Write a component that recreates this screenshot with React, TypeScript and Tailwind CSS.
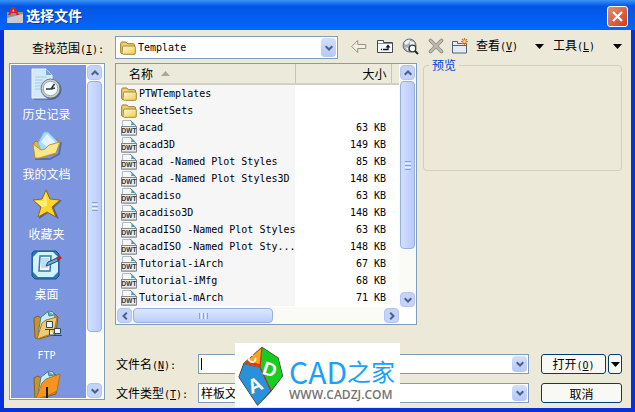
import type { ReactNode } from "react";

const files: { name: string; size?: string }[] = [
  { name: "PTWTemplates" },
  { name: "SheetSets" },
  { name: "acad", size: "63 KB" },
  { name: "acad3D", size: "149 KB" },
  { name: "acad -Named Plot Styles", size: "85 KB" },
  { name: "acad -Named Plot Styles3D", size: "148 KB" },
  { name: "acadiso", size: "63 KB" },
  { name: "acadiso3D", size: "148 KB" },
  { name: "acadISO -Named Plot Styles", size: "63 KB" },
  { name: "acadISO -Named Plot Sty...", size: "148 KB" },
  { name: "Tutorial-iArch", size: "67 KB" },
  { name: "Tutorial-iMfg", size: "68 KB" },
  { name: "Tutorial-mArch", size: "71 KB" },
];

function Latin({ children }: { children: ReactNode }) {
  return <span className="font-['DejaVu_Sans_Mono',monospace] text-[10px]">{children}</span>;
}

function Hotkey({ letter, colon }: { letter: string; colon?: boolean }) {
  return (
    <Latin>
      (<u className="underline-offset-1">{letter}</u>){colon ? ":" : ""}
    </Latin>
  );
}

function FolderIcon() {
  return (
    <svg className="h-4 w-4 shrink-0" viewBox="0 0 16 16" aria-hidden="true">
      <defs>
        <linearGradient id="folder" x1="0" y1="0" x2="1" y2="1">
          <stop offset="0" stopColor="#fffbd0" />
          <stop offset="1" stopColor="#efcb55" />
        </linearGradient>
      </defs>
      <path d="M.7 12.500V3.600Q.7 2 1.800 2h4l1.600 1.700h6q1 0 1 1v7.800q0 1-1 1h-11.600q-1.100 0-1.100-1z" fill="#f0d070" stroke="#9a7922" />
      <path d="M3.600 6h10.500q1.300 0 1.200 1.100v5.700q0 1.500-1.100 1.500H3.400Q2 14.300 2.100 12.800L2.500 7q.1-1 1.100-1z" fill="url(#folder)" stroke="#a9872e" />
    </svg>
  );
}

function DwtIcon() {
  return (
    <svg className="h-[17px] w-4 shrink-0" viewBox="0 0 16 17" aria-hidden="true">
      <path d="M1.500 1.500h8.500l4.500 4.500v10.500h-13z" fill="#f6f8f9" stroke="#b4babd" />
      <path d="M9 1l6 6V16" fill="none" stroke="#8d9599" />
      <path d="M9.200 1.200q2 2 .8 5 2-.8 5 .6z" fill="#4a9bbd" />
      <rect x=".5" y="7.500" width="15" height="8.500" fill="#e9ebec" stroke="#84898c" />
      <text x="8" y="14.200" textAnchor="middle" fontSize="6.500" fontWeight="bold" fontFamily="Liberation Sans, sans-serif" fill="#333">DWT</text>
    </svg>
  );
}

function Chevron({ className }: { className?: string }) {
  return (
    <svg className={`h-2 w-2 ${className ?? ""}`} viewBox="0 0 8 8" aria-hidden="true">
      <path d="M.7 2.200L4 5.500l3.300-3.300" fill="none" stroke="#4d6185" strokeWidth="2" />
    </svg>
  );
}

function ScrollButton({ label, turn }: { label: string; turn: string }) {
  return (
    <button type="button" aria-label={label} className="flex h-[15px] w-[15px] shrink-0 items-center justify-center rounded-sm border border-[#b4c6ee] bg-[#c4d3fb]">
      <Chevron className={turn} />
    </button>
  );
}

function DropBox() {
  return (
    <span className="pointer-events-none flex w-[15px] shrink-0 items-center justify-center self-stretch rounded-sm bg-linear-to-b from-[#d2dffd] to-[#b4c8f6]">
      <Chevron />
    </span>
  );
}

function DownTriangle() {
  return (
    <svg className="h-[5px] w-[9px] shrink-0" viewBox="0 0 9 5" aria-hidden="true">
      <path d="M0 0h9L4.500 5z" fill="#000" />
    </svg>
  );
}

function VerticalThumb({ grow }: { grow: string }) {
  return (
    <div className={`my-px flex w-[15px] flex-col items-center justify-center gap-px rounded-sm border border-[#98b0e0] bg-linear-to-r from-[#d3dfff] to-[#b8cbfa] ${grow}`}>
      <span className="h-px w-[6px] bg-[#8ca4dc]" />
      <span className="h-px w-[6px] bg-[#eef4fe]" />
      <span className="h-px w-[6px] bg-[#8ca4dc]" />
      <span className="h-px w-[6px] bg-[#eef4fe]" />
      <span className="h-px w-[6px] bg-[#8ca4dc]" />
    </div>
  );
}

function HistoryIcon() {
  return (
    <svg className="h-[34px] w-8" viewBox="0 0 32 34" aria-hidden="true">
      <path d="M3 31h17l5-2" fill="none" stroke="#4a5f9c" strokeWidth="2" opacity=".6" />
      <path d="M1 1h14l6 6v23H1z" fill="#d3e8f8" stroke="#e9f5fd" />
      <path d="M15 1v6h6z" fill="#6fa9d6" />
      <path d="M4 9h12M4 12h8M4 15h7M4 18h6M4 21h5" stroke="#a5cbe9" />
      <circle cx="20.500" cy="21.500" r="10" fill="#3f4d66" opacity=".7" />
      <circle cx="19.500" cy="20.500" r="9.500" fill="#c8cfce" stroke="#6f7f80" />
      <circle cx="19.500" cy="20.500" r="7.200" fill="#f5fdff" stroke="#9aabab" />
      <path d="M23.500 16l-3.500 5h-5M20 21l4-1" fill="none" stroke="#26394b" strokeWidth="1.600" />
    </svg>
  );
}

function DocumentsIcon() {
  return (
    <svg className="h-[34px] w-8" viewBox="0 0 32 34" aria-hidden="true">
      <path d="M4 31h15l9-5 2-12" fill="none" stroke="#43548e" strokeWidth="2" opacity=".6" />
      <path d="M2 16l3-3 4 2 17-4 2 4-4 11-20 4z" fill="#e6b432" stroke="#a97d1d" />
      <path d="M7 15l6-11h4l10 10-5 9-11 2z" fill="#a9dafa" stroke="#78b6e2" />
      <path d="M10 14l6-8 8 8-5 7z" fill="#e2f5ff" />
      <path d="M2 16l8 6 4-1 4-4 11-3-4 11-17 5H4z" fill="#fbe58d" stroke="#c79527" />
    </svg>
  );
}

function StarIcon() {
  return (
    <svg className="h-[34px] w-8" viewBox="0 0 32 34" aria-hidden="true">
      <path d="M16 3l4 10 11-1-8 8 5 11-11-6-9 6 2-11-8-8h10z" fill="#40487a" opacity=".7" />
      <path d="M15 2l4 9 10 1-8 7 4 10-9-5-9 5 3-10-8-7 9-1z" fill="#ffd629" stroke="#9c6a0b" strokeLinejoin="round" />
      <path d="M15 5l-3 8-8 0 7 6 5-1z" fill="#fff07a" />
    </svg>
  );
}

function DesktopIcon() {
  return (
    <svg className="h-[34px] w-8" viewBox="0 0 32 34" aria-hidden="true">
      <path d="M1 5l2-2h22l3 3v22l-3 3H4l-3-3z" fill="#2f77bd" stroke="#15508d" />
      <path d="M2 9l5-5h15l5 5v15l-5 5H7l-5-5z" fill="#d3f0fd" />
      <path d="M9 8h11l-1 15H8z" fill="#f8fdff" stroke="#2d78b4" strokeWidth="1.500" />
      <path d="M10 10h8l-1 10h-7z" fill="#bcdff3" />
      <path d="M15 18l2-4 9-4 1 3-9 4z" fill="#75a7cf" stroke="#1c4c7c" />
      <path d="M26 11l4-2" stroke="#b3263a" strokeWidth="3.500" />
    </svg>
  );
}

function FtpIcon({ orange }: { orange?: boolean }) {
  return (
    <svg className="h-[34px] w-8" viewBox="0 0 32 34" aria-hidden="true">
      <path d="M3 10l4-2 3 2 14-4 3 3-2 17-17 5-4-1z" fill="#c99231" stroke="#84601e" />
      <path d="M7 26L10 9l8-6 4 1 2 4-4 18z" fill="#c7edfa" stroke="#477c92" />
      <path d="M17 3l1 5 5-1" fill="#6eaac4" stroke="#477c92" />
      <path d={orange ? "M5 31l6-16 4-4 14-5-3 17-10 5z" : "M6 31l5-16 4-3 11-3-3 16z"} fill={orange ? "#f7941e" : "#edcb70"} stroke="#a77723" />
      {orange ? (
        <path d="M16 19v13" stroke="#1c2026" strokeWidth="2" />
      ) : (
        <g fill="#e9f8ff" stroke="#354862">
          <path d="M15.500 13.500h6v6h-6zM14 21.500h9M18.500 22v5h5M23.500 20.500h6v5h-6zM22 27.500h9" />
        </g>
      )}
    </svg>
  );
}

const places = [
  { label: "历史记录", icon: <HistoryIcon /> },
  { label: "我的文档", icon: <DocumentsIcon /> },
  { label: "收藏夹", icon: <StarIcon /> },
  { label: "桌面", icon: <DesktopIcon /> },
  { label: "FTP", icon: <FtpIcon /> },
  { label: "", icon: <FtpIcon orange /> },
];

function TitleBar() {
  return (
    <header className="flex h-[30px] shrink-0 items-center bg-linear-to-b from-[#3a93f8] via-[#0355e4] via-20% to-[#0366fa] px-[7px]">
      <svg className="h-4 w-4" viewBox="0 0 16 16" aria-hidden="true">
        <path d="M0 5h16v11H0z" fill="#8f9297" />
        <path d="M0 11l16-4v9H0z" fill="#c9cbcd" />
        <path d="M1 8L4.500 0h3.500l4 8H9.500L8.500 6h-4L3.500 8z" fill="#d92024" />
        <path d="M5.300 4.500L6.300 2l1.200 2.500z" fill="#fff" />
      </svg>
      <h1 className="ml-[3px] flex-1 text-sm leading-5 font-bold text-white [text-shadow:1px_1px_#0c3690]">选择文件</h1>
      <button type="button" aria-label="关闭" className="mt-[3px] flex h-[21px] w-[21px] items-center justify-center rounded-[3px] border border-white bg-linear-to-br from-[#e98a6c] to-[#cc3a12]">
        <svg className="h-[11px] w-[11px]" viewBox="0 0 11 11" aria-hidden="true">
          <path d="M1 1l9 9M10 1l-9 9" stroke="#fff" strokeWidth="2.200" />
        </svg>
      </button>
    </header>
  );
}

function Toolbar() {
  return (
    <div className="flex h-5 w-[271px] shrink-0 items-center">
      <button type="button" aria-label="后退" className="w-[26px]">
        <svg className="h-4 w-4" viewBox="0 0 16 16" aria-hidden="true">
          <path d="M.7 8.500l6-6v4h8v4h-8v4z" fill="#f2f0e4" stroke="#92948a" />
        </svg>
      </button>
      <button type="button" aria-label="向上一级" className="w-[25px]">
        <svg className="h-4 w-4" viewBox="0 0 16 16" aria-hidden="true">
          <path d="M.5 14.500v-12h6v2h9v10z" fill="#f6f8fb" stroke="#3f4650" />
          <path d="M1 5.500h14" stroke="#89909a" />
          <path d="M4 11.500h1M6 11.500h5V8" fill="none" stroke="#111" strokeWidth="1.300" />
          <path d="M8.500 9.500L11 6.500l2.500 3z" fill="#111" />
        </svg>
      </button>
      <button type="button" aria-label="搜索 Web" className="w-[26px]">
        <svg className="h-[17px] w-[17px]" viewBox="0 0 17 17" aria-hidden="true">
          <circle cx="7.500" cy="7.500" r="6.500" fill="#a3adb3" stroke="#66706f" />
          <path d="M2 5q3-4 6-3l-1 3-3 2zM8 3l4 1 1 4-5-1zM3 9l3 1v3z" fill="#eef4f5" />
          <circle cx="10.500" cy="10.500" r="3.300" fill="#fff" stroke="#303942" strokeWidth="1.300" />
          <path d="M13 13l3 3" stroke="#20262b" strokeWidth="2" />
        </svg>
      </button>
      <button type="button" aria-label="删除" className="w-6">
        <svg className="h-4 w-4" viewBox="0 0 16 16" aria-hidden="true">
          <path d="M2.500 2.500l11 11M13.500 2.500l-11 11" stroke="#8a8b82" strokeWidth="3.600" strokeLinecap="round" />
          <path d="M2.500 2.500l11 11M13.500 2.500l-11 11" stroke="#bdbcb0" strokeWidth="2" strokeLinecap="round" />
        </svg>
      </button>
      <button type="button" aria-label="创建新文件夹" className="w-6">
        <svg className="h-4 w-4" viewBox="0 0 16 16" aria-hidden="true">
          <path d="M.5 15v-11.500h5v2h9V15z" fill="#e6ebf5" stroke="#536078" />
          <path d="M1 7.500h13" stroke="#536078" />
          <path d="M12.500 0v7M9 3.500h7M10 1l5 5M15 1l-5 5" stroke="#dc7422" strokeWidth="1.200" />
          <circle cx="12.500" cy="3.500" r="1.300" fill="#ffe08a" />
        </svg>
      </button>
      <button type="button" className="flex flex-1 items-center justify-between pr-[9px] leading-4">
        <span>查看<Hotkey letter="V" /></span>
        <DownTriangle />
      </button>
      <button type="button" className="flex w-[69px] items-center justify-between leading-4">
        <span>工具<Hotkey letter="L" /></span>
        <DownTriangle />
      </button>
    </div>
  );
}

function PlacesBar() {
  return (
    <nav aria-label="位置" className="mb-[3px] flex w-24 shrink-0 overflow-hidden border border-[#7f9db9] bg-white p-px">
      <ul className="h-full flex-1 overflow-hidden bg-[#7b95de]">
        {places.map((place, i) => (
          <li key={i}>
            <button type="button" className="flex h-[60px] w-full flex-col items-center gap-1 pt-[3px] pr-1 text-white">
              {place.icon}
              <span className="leading-4">{place.label === "FTP" ? <Latin>FTP</Latin> : place.label}</span>
            </button>
          </li>
        ))}
      </ul>
      <div className="flex w-[17px] flex-col items-center bg-[#fafaf6]">
        <ScrollButton label="向上滚动" turn="rotate-180" />
        <VerticalThumb grow="flex-[5]" />
        <div className="flex-1" />
        <ScrollButton label="向下滚动" turn="" />
      </div>
    </nav>
  );
}

function FileList() {
  return (
    <section className="flex min-w-0 flex-1 flex-col border border-[#7f9db9] bg-white">
      <div className="flex min-h-0 flex-1">
        <div className="min-w-0 flex-1 overflow-hidden">
          <table className="w-full table-fixed border-collapse">
            <thead className="bg-[#ebeadb]">
              <tr className="h-5 border-b-2 border-[#d3d0c1] leading-4">
                <th scope="col" className="p-0 pl-[13px] text-left font-normal">
                  <span className="flex items-center gap-2">
                    名称
                    <svg className="h-[5px] w-[9px]" viewBox="0 0 9 5" aria-hidden="true">
                      <path d="M0 5h9L4.500 0z" fill="#aca899" />
                    </svg>
                  </span>
                </th>
                <th scope="col" className="w-24 border-x border-[#c7c5b2] p-0 pr-1 text-right font-normal">大小</th>
                <td className="w-2 p-0" />
              </tr>
            </thead>
            <tbody>
              {files.map((file) => (
                <tr key={file.name} className="h-[17px] leading-[17px]">
                  <td className="bg-[#f6f6f6] p-0 pl-[5px]">
                    <span className="flex h-[17px] items-center gap-[2px] whitespace-nowrap">
                      {file.size ? <DwtIcon /> : <FolderIcon />}
                      <Latin>{file.name}</Latin>
                    </span>
                  </td>
                  <td className="p-0 pr-[5px]">
                    <span className="flex h-[17px] items-center justify-end whitespace-nowrap"><Latin>{file.size}</Latin></span>
                  </td>
                  <td className="p-0" />
                </tr>
              ))}
            </tbody>
          </table>
        </div>
        <div className="flex w-[17px] flex-col items-center bg-[#fafaf6] pt-px">
          <ScrollButton label="向上滚动" turn="rotate-180" />
          <VerticalThumb grow="flex-[4]" />
          <div className="flex-1" />
          <ScrollButton label="向下滚动" turn="" />
        </div>
      </div>
      <div className="mr-[17px] flex h-[17px] items-center bg-[#fafaf6] pl-px">
        <ScrollButton label="向左滚动" turn="rotate-90" />
        <div className="ml-px flex h-[15px] flex-[5] items-center justify-center gap-px rounded-sm border border-[#98b0e0] bg-linear-to-b from-[#dce8ff] to-[#b8cefa]">
          <span className="h-[6px] w-px bg-[#8ca4dc]" />
          <span className="h-[6px] w-px bg-[#eef4fe]" />
          <span className="h-[6px] w-px bg-[#8ca4dc]" />
          <span className="h-[6px] w-px bg-[#eef4fe]" />
          <span className="h-[6px] w-px bg-[#8ca4dc]" />
        </div>
        <div className="flex-[4]" />
        <ScrollButton label="向右滚动" turn="-rotate-90" />
      </div>
    </section>
  );
}

function Logo() {
  return (
    <div className="absolute -top-[11px] left-[120px] flex h-16 w-[165px] bg-white">
      <svg className="mt-[3px] ml-[3px] h-[60px] w-[46px] shrink-0" viewBox="0 0 46 60" aria-hidden="true">
        <g stroke="#3a3a2a" strokeWidth="1.200" strokeLinejoin="round">
          <path d="M24 1.500L6 17.500 1 31l18.500 28L33 45l11.500-15-4.500-18z" fill="#3a3a2a" />
        </g>
        <path d="M24 1.500L6 17.500l16 4z" fill="#f9a31a" />
        <path d="M6 17.500l3-3 14 4-1 3z" fill="#e23a10" />
        <path d="M24 1.500L40 12l4.500 18L33 44.500 22 21z" fill="#16cd22" />
        <path d="M24 1.500L22 21l11 23.500" fill="none" stroke="#c8301a" strokeWidth="1.200" />
        <path d="M6 18l15.500 3.500L32.500 45l-13 14L1 31z" fill="#2a90d8" />
        <g fill="#fff" fontFamily="Liberation Sans, sans-serif" fontWeight="bold" textAnchor="middle">
          <text transform="translate(14 13) rotate(-42)" y="4" fontSize="12">C</text>
          <text transform="translate(32 23) rotate(18)" y="7" fontSize="19">D</text>
          <text transform="translate(17 39) rotate(-24)" y="7" fontSize="20">A</text>
        </g>
      </svg>
      <div className="ml-[5px] pt-3 whitespace-nowrap">
        <div className="flex h-8 items-center text-[#1a9fff]">
          <span className="text-[30px] leading-8">CAD</span>
          <span className="text-2xl leading-8">之家</span>
        </div>
        <div className="font-['Open_Sans',sans-serif] text-xs leading-4 font-semibold text-[#737373]">WWW.CADZJ.COM</div>
      </div>
    </div>
  );
}

function Footer() {
  return (
    <form className="relative mt-[29px] grid shrink-0 grid-cols-[83px_minmax(0,1fr)_81px] gap-y-[9px]" onSubmit={(e) => e.preventDefault()}>
      <label htmlFor="filename" className="h-5 pl-px leading-5">文件名<Hotkey letter="N" colon /></label>
      <div className="mr-3 flex h-5 items-center border border-[#7f9db9] bg-white p-px pl-[2px]">
        <span className="h-3 w-px bg-black" />
        <input id="filename" type="text" className="h-4 min-w-0 flex-1 bg-transparent outline-none" />
        <DropBox />
      </div>
      <div className="flex h-5 gap-[2px]">
        <button type="submit" className="flex-1 rounded-[3px] border border-[#003c74] bg-[#f8f8f4] leading-[17px]">打开<Hotkey letter="O" /></button>
        <button type="button" aria-label="打开选项" className="flex w-[14px] items-center justify-center rounded-[3px] border border-[#003c74] bg-[#f8f8f4]">
          <DownTriangle />
        </button>
      </div>
      <label htmlFor="filetype" className="h-5 pl-px leading-5">文件类型<Hotkey letter="T" colon /></label>
      <div className="mr-3 flex h-5 items-center border border-[#7f9db9] bg-white p-px pl-[2px]">
        <select id="filetype" className="h-4 min-w-0 flex-1 appearance-none bg-transparent leading-4 outline-none">
          <option>样板文</option>
        </select>
        <DropBox />
      </div>
      <button type="button" className="h-5 rounded-[3px] border border-[#003c74] bg-[#f8f8f4] leading-[17px]">取消</button>
      <Logo />
    </form>
  );
}

export default function App() {
  return (
    <main className="flex h-screen flex-col overflow-hidden bg-[#0831d9] font-['Noto_Sans_CJK_SC',sans-serif] text-xs text-black">
      <TitleBar />
      <div className="mx-1 mb-1 flex min-h-0 flex-1 flex-col gap-1 bg-[#ece9d8] pt-[6px] pr-[9px] pb-[5px] pl-[5px]">
        <div className="flex h-[23px] shrink-0">
          <label htmlFor="lookin" className="w-[106px] pl-[23px] leading-[23px]">查找范围<Hotkey letter="I" colon /></label>
          <div className="mr-[13px] flex min-w-0 flex-1 items-center border border-[#7f9db9] bg-white p-px pl-1">
            <FolderIcon />
            <select id="lookin" className="ml-[2px] h-4 min-w-0 flex-1 appearance-none bg-transparent font-['DejaVu_Sans_Mono',monospace] text-[10px] leading-4 outline-none">
              <option>Template</option>
            </select>
            <DropBox />
          </div>
          <Toolbar />
        </div>
        <div className="flex min-h-0 flex-1 gap-[10px]">
          <PlacesBar />
          <div className="flex min-w-0 flex-1 flex-col">
            <div className="flex min-h-0 flex-1 gap-[6px]">
              <FileList />
              <fieldset className="-mt-[6px] h-[114px] w-[199px] shrink-0 rounded border border-[#d0d0bf] px-[5px]">
                <legend className="px-[3px] leading-4 text-[#0046d5]">预览</legend>
              </fieldset>
            </div>
            <Footer />
          </div>
        </div>
      </div>
    </main>
  );
}
